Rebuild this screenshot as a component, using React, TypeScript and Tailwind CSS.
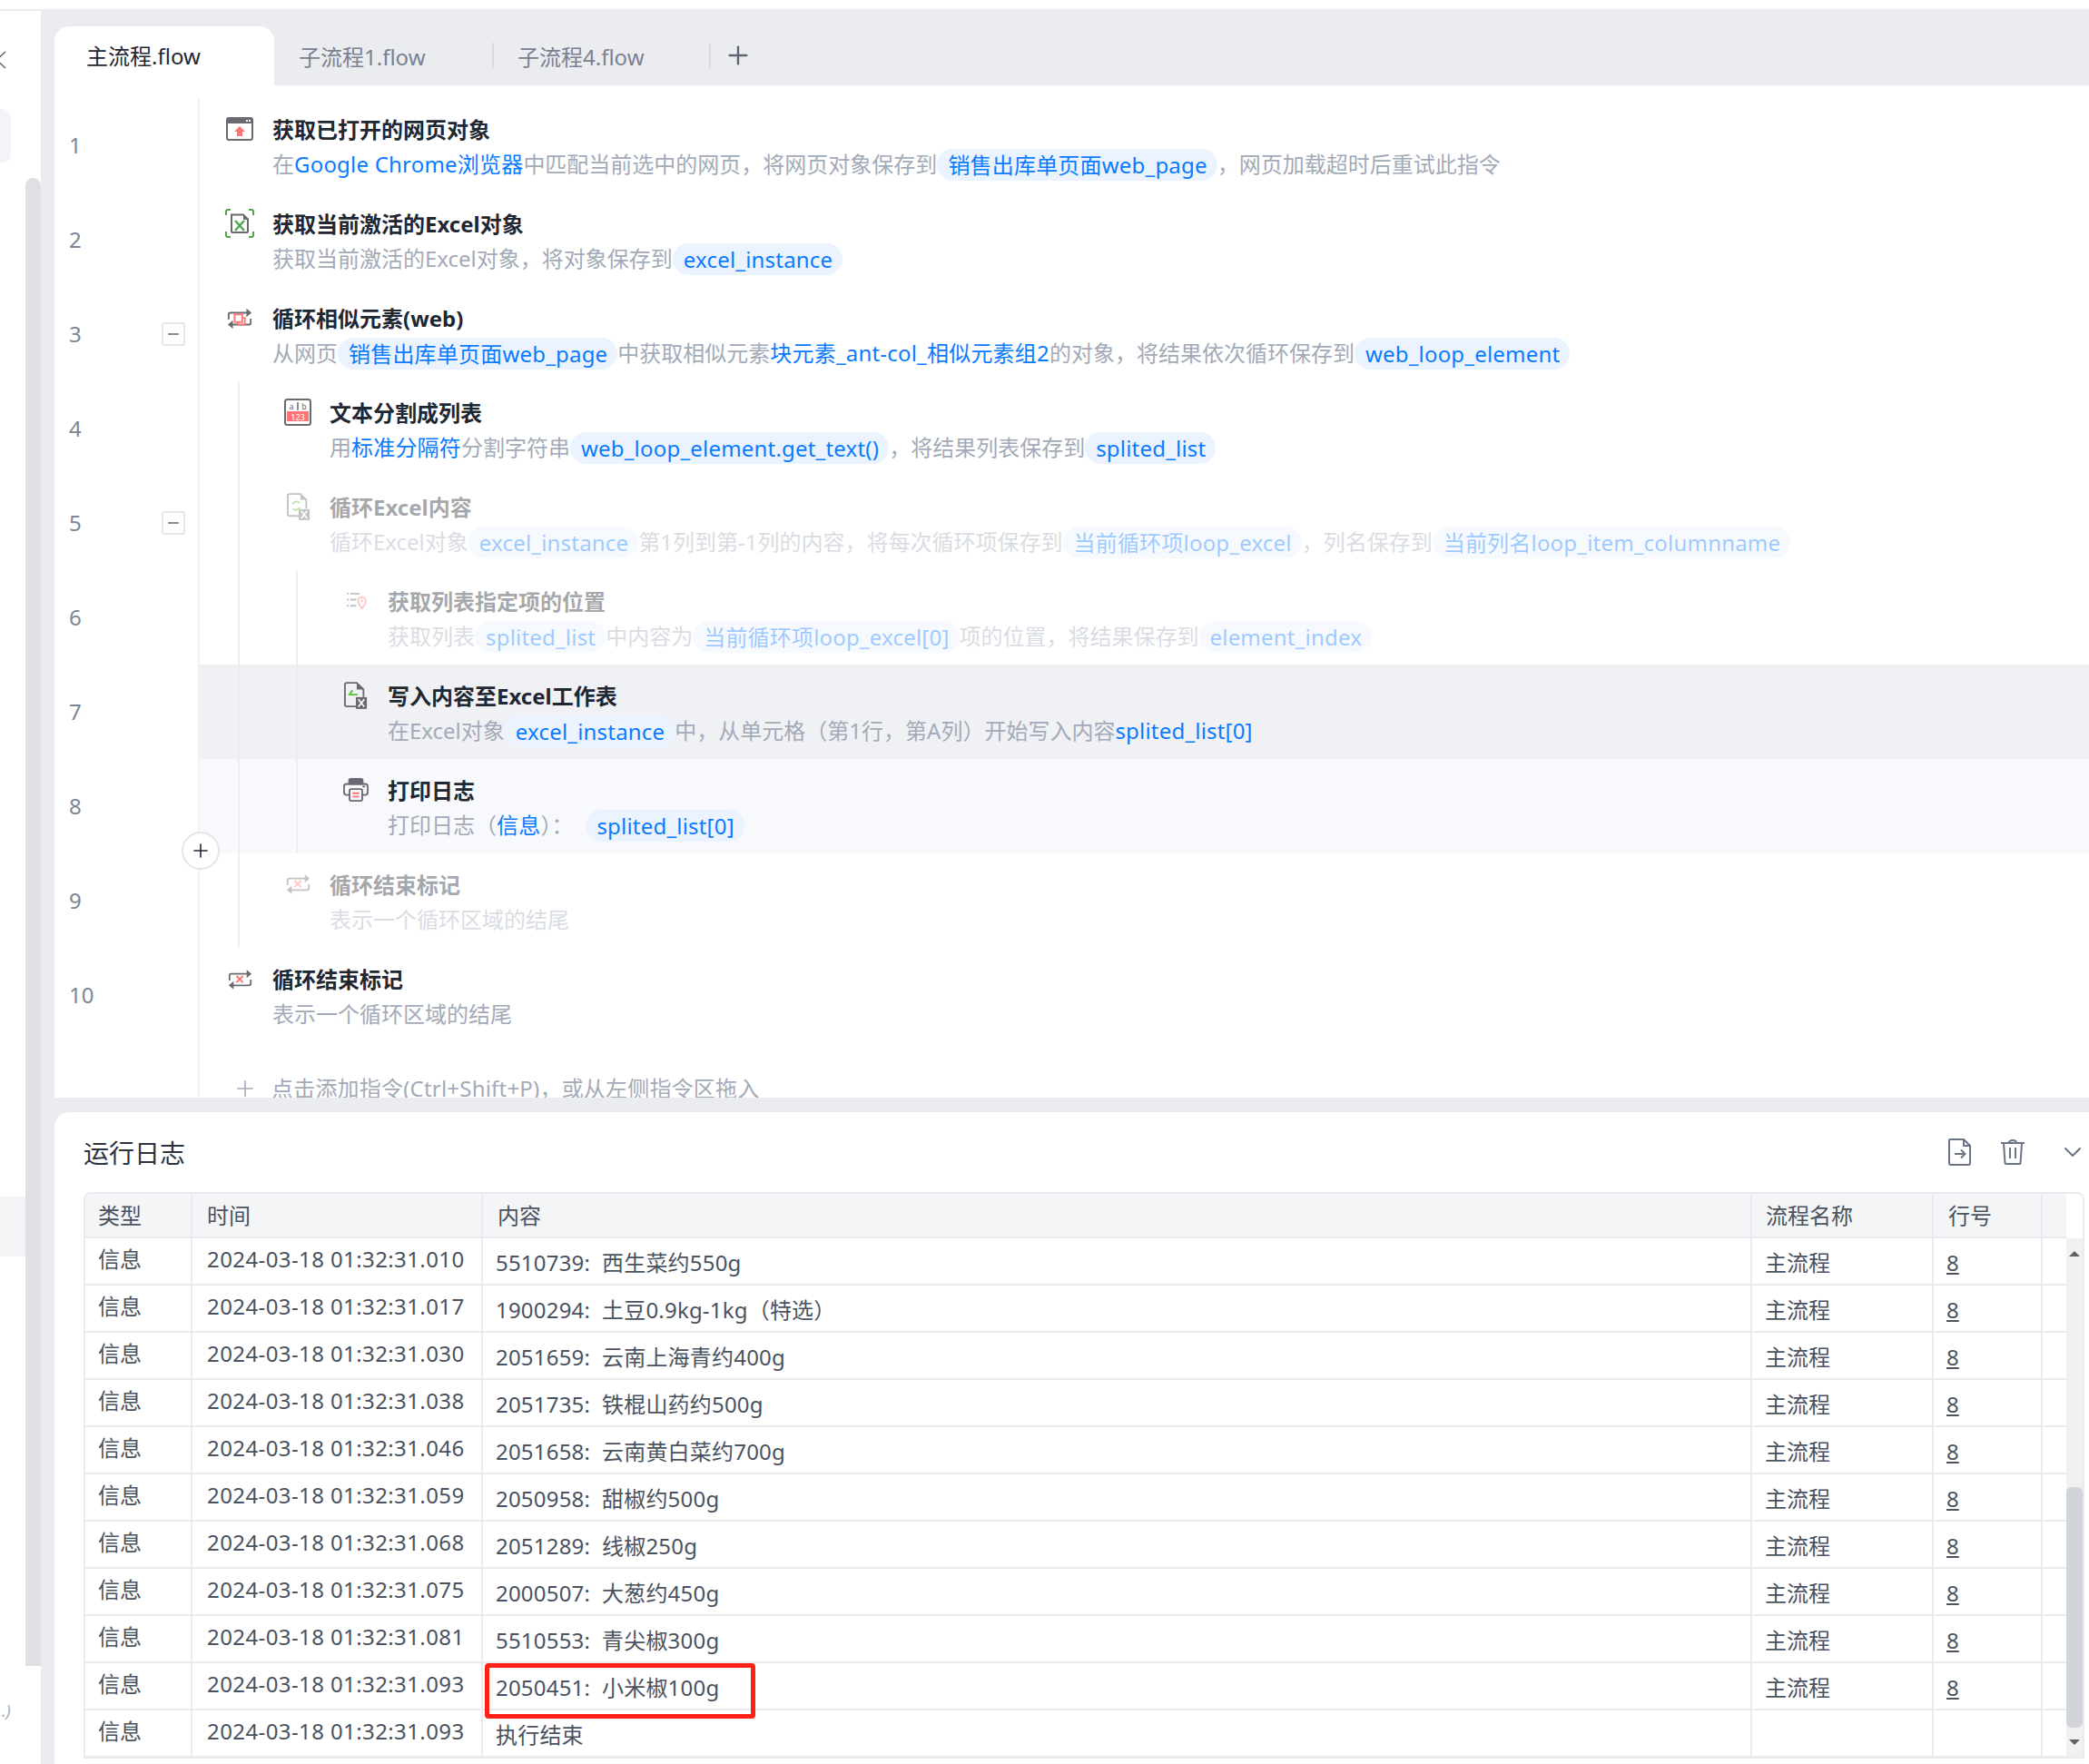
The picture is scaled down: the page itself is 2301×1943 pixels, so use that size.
import { ReactNode } from "react";
import { ChevronDown, Minus, Plus } from "lucide-react";

const GREY = "#6a6a72";
const RED = "#ff7474";

const WindowIcon = () => (
  <svg width="30" height="26" viewBox="0 0 30 26" fill="none">
    <rect x="1" y="1" width="28" height="24" rx="2" stroke={GREY} strokeWidth="2" />
    <path d="M1 3a2 2 0 0 1 2-2h24a2 2 0 0 1 2 2v4H1z" fill={GREY} />
    <path d="M22 3h2v2h-2zM25 3h2v2h-2z" fill="#fff" />
    <path d="M15 10l6 6h-3v5h-6v-5H9z" fill={RED} />
  </svg>
);

const ExcelScanIcon = () => (
  <svg width="32" height="32" viewBox="0 0 32 32" fill="none">
    <path d="M1 7V3a2 2 0 0 1 2-2h3M26 1h3a2 2 0 0 1 2 2v4M31 25v4a2 2 0 0 1-2 2h-3M6 31H3a2 2 0 0 1-2-2v-4" stroke="#4ea64a" strokeWidth="2" />
    <path d="M7 6.500h13l5 5V25a1 1 0 0 1-1 1H8a1 1 0 0 1-1-1z" stroke={GREY} strokeWidth="2" />
    <path d="M20 6l6 6h-6z" fill={GREY} />
    <path d="M11 13l10 11M21 13L11 24" stroke="#4ea64a" strokeWidth="2.400" />
  </svg>
);

const LoopArrows = () => (
  <>
    <path d="M27 6H4a2 2 0 0 0-2 2v6M3 20h23a2 2 0 0 0 2-2v-5" stroke={GREY} strokeWidth="2" />
    <path d="M23 1l6 5-6 5zM7 15l-6 5 6 5z" fill={GREY} />
  </>
);

const LoopSimilarIcon = () => (
  <svg width="28" height="26" viewBox="0 0 30 26" fill="none">
    <LoopArrows />
    <path d="M18 12h3v8h-8v-3" fill="#fff" stroke={RED} strokeWidth="2" />
    <rect x="9" y="8" width="9" height="9" fill="#fff" stroke={RED} strokeWidth="2" />
  </svg>
);

const LoopEndIcon = () => (
  <svg width="27" height="24" viewBox="0 0 30 26" fill="none">
    <LoopArrows />
    <path d="M10.500 8.500l8 8M18.500 8.500l-8 8" stroke={RED} strokeWidth="2.200" />
  </svg>
);

const SplitIcon = () => (
  <svg width="30" height="30" viewBox="0 0 30 30" fill="none">
    <rect x="1" y="1" width="28" height="28" rx="2.500" stroke={GREY} strokeWidth="2" />
    <text x="8" y="12" fontSize="9" fill={GREY} textAnchor="middle" fontFamily="Noto Sans">a</text>
    <path d="M15 4v9" stroke={GREY} strokeWidth="1.500" />
    <text x="22" y="12" fontSize="9" fill={GREY} textAnchor="middle" fontFamily="Noto Sans">b</text>
    <rect x="3" y="14" width="24" height="11" fill={RED} />
    <text x="15" y="23.500" fontSize="9" fill="#fff" textAnchor="middle" fontFamily="Noto Sans">123</text>
  </svg>
);

const ExcelLoopIcon = () => (
  <svg width="26" height="32" viewBox="0 0 28 32" fill="none">
    <path d="M14 27H3a2 2 0 0 1-2-2V3a2 2 0 0 1 2-2h13l7 7v10" stroke={GREY} strokeWidth="2" />
    <path d="M16 1l7 7h-7z" fill={GREY} />
    <path d="M7 13a5 5 0 0 1 8-1.500M15 17a5 5 0 0 1-8 1.500" stroke="#55c02c" strokeWidth="2" />
    <rect x="14" y="19" width="13" height="13" fill={GREY} />
    <path d="M17 21l7 9M24 21l-7 9" stroke="#fff" strokeWidth="1.800" />
  </svg>
);

const ListPinIcon = () => (
  <svg width="23" height="19" viewBox="0 0 24 20" fill="none">
    <path d="M1 2h2M5 2h11M1 9h2M5 9h7M1 16h2M5 16h7" stroke={GREY} strokeWidth="2" />
    <path d="M18.500 19c-3-3.500-4.500-6-4.500-8.500a4.500 4.500 0 0 1 9 0c0 2.500-1.500 5-4.500 8.500z" stroke={RED} strokeWidth="2" />
    <circle cx="18.500" cy="10.500" r="1.500" fill={RED} />
  </svg>
);

const ExcelWriteIcon = () => (
  <svg width="26" height="32" viewBox="0 0 28 32" fill="none">
    <path d="M14 29H3a2 2 0 0 1-2-2V3a2 2 0 0 1 2-2h12l8 8v9" stroke={GREY} strokeWidth="2" />
    <path d="M15 1l8 8h-8z" fill={GREY} />
    <path d="M5 15h11M7 14l3-4" stroke="#55c02c" strokeWidth="2" />
    <rect x="14" y="18" width="13" height="14" fill={GREY} />
    <path d="M17 20.500l7 9M24 20.500l-7 9" stroke="#fff" strokeWidth="1.800" />
  </svg>
);

const PrintIcon = () => (
  <svg width="28" height="26" viewBox="0 0 30 28" fill="none">
    <path d="M7 7V3a2 2 0 0 1 2-2h12a2 2 0 0 1 2 2v4z" fill={GREY} stroke={GREY} strokeWidth="2" />
    <path d="M7 20H4a3 3 0 0 1-3-3v-7a3 3 0 0 1 3-3h22a3 3 0 0 1 3 3v7a3 3 0 0 1-3 3h-3" stroke={GREY} strokeWidth="2" />
    <rect x="7.500" y="13" width="15" height="14" rx="2" fill="#f7f9fd" stroke={GREY} strokeWidth="2" />
    <path d="M11 18h8M11 22h8" stroke={RED} strokeWidth="2" />
    <path d="M23 10h3" stroke={GREY} strokeWidth="2" />
  </svg>
);

const Pill = ({ children, className = "" }: { children: ReactNode; className?: string }) => (
  <span className={`h-[35px] pl-[12px] pr-[11px] rounded-full bg-[#ebf3ff] text-[#0b7bff] tracking-[0.2px] leading-[35px] shrink-0 ${className}`}>{children}</span>
);

const Blue = ({ children }: { children: ReactNode }) => (
  <span className="text-[#0b7bff] tracking-[0.2px]">{children}</span>
);

type Step = {
  depth: number;
  icon: ReactNode;
  iconPad: string;
  title: string;
  desc: ReactNode;
  off?: boolean;
  fold?: boolean;
  bg?: string;
};

const steps: Step[] = [
  {
    depth: 0,
    icon: <WindowIcon />,
    iconPad: "pt-[21px] -ml-[1px]",
    title: "获取已打开的网页对象",
    desc: (
      <>
        <span>在</span>
        <Blue>Google Chrome浏览器</Blue>
        <span>中匹配当前选中的网页，将网页对象保存到</span>
        <Pill>销售出库单页面web_page</Pill>
        <span>，网页加载超时后重试此指令</span>
      </>
    ),
  },
  {
    depth: 0,
    icon: <ExcelScanIcon />,
    iconPad: "pt-[18px] -ml-[2px]",
    title: "获取当前激活的Excel对象",
    desc: (
      <>
        <span>获取当前激活的Excel对象，将对象保存到</span>
        <Pill>excel_instance</Pill>
      </>
    ),
  },
  {
    depth: 0,
    fold: true,
    icon: <LoopSimilarIcon />,
    iconPad: "pt-[22px]",
    title: "循环相似元素(web)",
    desc: (
      <>
        <span>从网页</span>
        <Pill>销售出库单页面web_page</Pill>
        <span>中获取相似元素</span>
        <Blue>块元素_ant-col_相似元素组2</Blue>
        <span>的对象，将结果依次循环保存到</span>
        <Pill>web_loop_element</Pill>
      </>
    ),
  },
  {
    depth: 1,
    icon: <SplitIcon />,
    iconPad: "pt-[19px]",
    title: "文本分割成列表",
    desc: (
      <>
        <span>用</span>
        <Blue>标准分隔符</Blue>
        <span>分割字符串</span>
        <Pill>web_loop_element.get_text()</Pill>
        <span>，将结果列表保存到</span>
        <Pill>splited_list</Pill>
      </>
    ),
  },
  {
    depth: 1,
    fold: true,
    off: true,
    icon: <ExcelLoopIcon />,
    iconPad: "pt-[18px] pl-[3px]",
    title: "循环Excel内容",
    desc: (
      <>
        <span>循环Excel对象</span>
        <Pill>excel_instance</Pill>
        <span>第1列到第-1列的内容，将每次循环项保存到</span>
        <Pill>当前循环项loop_excel</Pill>
        <span>，列名保存到</span>
        <Pill>当前列名loop_item_columnname</Pill>
      </>
    ),
  },
  {
    depth: 2,
    off: true,
    icon: <ListPinIcon />,
    iconPad: "pt-[24px] pl-[4px]",
    title: "获取列表指定项的位置",
    desc: (
      <>
        <span>获取列表</span>
        <Pill>splited_list</Pill>
        <span>中内容为</span>
        <Pill>当前循环项loop_excel[0]</Pill>
        <span>项的位置，将结果保存到</span>
        <Pill>element_index</Pill>
      </>
    ),
  },
  {
    depth: 2,
    bg: "bg-[#f0f1f5]",
    icon: <ExcelWriteIcon />,
    iconPad: "pt-[18px] pl-[2px]",
    title: "写入内容至Excel工作表",
    desc: (
      <>
        <span>在Excel对象</span>
        <Pill>excel_instance</Pill>
        <span>中，从单元格（第1行，第A列）开始写入内容</span>
        <Blue>splited_list[0]</Blue>
      </>
    ),
  },
  {
    depth: 2,
    bg: "bg-[#f7f9fd]",
    icon: <PrintIcon />,
    iconPad: "pt-[21px] pl-[1px]",
    title: "打印日志",
    desc: (
      <>
        <span>打印日志（</span>
        <Blue>信息</Blue>
        <span>）：</span>
        <Pill className="ml-[14px]">splited_list[0]</Pill>
      </>
    ),
  },
  {
    depth: 1,
    off: true,
    icon: <LoopEndIcon />,
    iconPad: "pt-[22px] pl-[2px]",
    title: "循环结束标记",
    desc: <span>表示一个循环区域的结尾</span>,
  },
  {
    depth: 0,
    icon: <LoopEndIcon />,
    iconPad: "pt-[23px] pl-[1px]",
    title: "循环结束标记",
    desc: <span>表示一个循环区域的结尾</span>,
  },
];

const logs = [
  ["2024-03-18 01:32:31.010", "5510739:  西生菜约550g"],
  ["2024-03-18 01:32:31.017", "1900294:  土豆0.9kg-1kg（特选）"],
  ["2024-03-18 01:32:31.030", "2051659:  云南上海青约400g"],
  ["2024-03-18 01:32:31.038", "2051735:  铁棍山药约500g"],
  ["2024-03-18 01:32:31.046", "2051658:  云南黄白菜约700g"],
  ["2024-03-18 01:32:31.059", "2050958:  甜椒约500g"],
  ["2024-03-18 01:32:31.068", "2051289:  线椒250g"],
  ["2024-03-18 01:32:31.075", "2000507:  大葱约450g"],
  ["2024-03-18 01:32:31.081", "5510553:  青尖椒300g"],
  ["2024-03-18 01:32:31.093", "2050451:  小米椒100g"],
  ["2024-03-18 01:32:31.093", "执行结束"],
];

function StepRow({ step, index }: { step: Step; index: number }) {
  return (
    <div className="flex h-[104px]">
      <div className="w-[158px] shrink-0 flex items-center justify-between pl-[16px] pr-[14px] text-[24px] text-[#7d8594]">
        <span>{index + 1}</span>
        {step.fold && (
          <span className="w-[26px] h-[26px] border-2 border-[#e4e6ea] rounded-[2px] flex items-center justify-center text-[#5d6472]">
            <Minus size={18} strokeWidth={2} />
          </span>
        )}
      </div>
      <div className={`flex-1 min-w-0 flex border-l-2 border-[#f0f1f4] ${step.bg ?? ""}`}>
        {step.depth === 0 && <div className="w-[30px] shrink-0" />}
        {step.depth > 0 && <div className="w-[42px] shrink-0" />}
        {step.depth === 2 && <div className="w-[64px] shrink-0 border-l-2 border-[#edeef2]" />}
        {step.depth > 0 && <div className="w-[51px] shrink-0 border-l-2 border-[#edeef2]" />}
        <div className={`flex whitespace-nowrap ${step.off ? "opacity-40" : ""}`}>
          <div className="w-[50px] shrink-0">
            <div className={step.iconPad}>{step.icon}</div>
          </div>
          <div>
            <div className="mt-[18px] h-[34px] leading-[34px] text-[24px] font-bold text-[#1f2733]">{step.title}</div>
            <div className="mt-[4px] h-[35px] flex items-center text-[24px] text-[#a3aab8] [&>span]:pb-[2px]">{step.desc}</div>
          </div>
        </div>
      </div>
    </div>
  );
}

function LogRow({ time, text, last }: { time: string; text: string; last: boolean }) {
  const flowName = text === "执行结束" ? "" : "主流程";
  return (
    <div className="flex h-[52px] border-b-2 border-[#eaebf0] text-[24px] text-[#4a5260]">
      <div className="w-[118px] shrink-0 border-r-2 border-[#eaebf0] pl-[14px] pb-[5px] flex items-center">信息</div>
      <div className="w-[320px] shrink-0 border-r-2 border-[#eaebf0] pl-[16px] pb-[5px] flex items-center tracking-[0.4px]">{time}</div>
      <div className="relative w-[1398px] shrink-0 border-r-2 border-[#eaebf0] pl-[14px] pt-[3px] flex items-center whitespace-pre tracking-[0.2px]">
        {text}
        {last && <div className="absolute left-[2px] top-0 w-[298px] h-[61px] border-[5px] border-[#ff2116] rounded-[4px]" />}
      </div>
      <div className="w-[200px] shrink-0 border-r-2 border-[#eaebf0] pl-[14px] pt-[3px] flex items-center">{flowName}</div>
      <div className="w-[120px] shrink-0 border-r-2 border-[#eaebf0] pl-[14px] pt-[3px] flex items-center">
        {flowName && <span className="underline">8</span>}
      </div>
      <div className="flex-1" />
    </div>
  );
}

export default function App() {
  return (
    <div className="w-[2301px] h-[1943px] overflow-hidden bg-white font-['Noto_Sans','Noto_Sans_CJK_SC',sans-serif]">
      <div className="h-[12px] bg-white border-b-2 border-[#ebecf0]" />
      <div className="flex h-[1931px]">
        <aside className="w-[45px] shrink-0 flex bg-white">
          <div className="w-[28px] shrink-0">
            <div className="mt-[44px] h-[20px] flex items-center -ml-[8px] text-[#5d6472]">
              <svg width="16" height="20" viewBox="0 0 16 20" fill="none">
                <path d="M14 1L4 10l10 9" stroke="currentColor" strokeWidth="1.500" />
              </svg>
            </div>
            <div className="mt-[44px] w-[12px] h-[60px] rounded-r-[10px] bg-[#f3f4f8]" />
            <div className="mt-[1138px] h-[66px] bg-[#f4f5f7]" />
            <div className="mt-[488px] pl-[2px] text-[18px] text-[#a3aab8] italic leading-[24px]">.)</div>
          </div>
          <div className="w-[17px] shrink-0 pt-[184px]">
            <div className="h-[1639px] rounded-t-full rounded-b-[8px] bg-[#dfe0e4]" />
          </div>
        </aside>
        <main className="flex-1 min-w-0 bg-[#ebecf0] pl-[15px] flex flex-col">
          <div className="h-[82px] pt-[17px] flex shrink-0 text-[24px] text-[#7a8190]">
            <div className="w-[242px] h-[65px] bg-white rounded-t-[16px] pl-[35px] flex items-center pt-[1px] text-[#1f2733]">主流程.flow</div>
            <div className="w-[240px] h-[28px] mt-[18px] pl-[27px] flex items-center pt-[3px]">
              <span>子流程1.flow</span>
            </div>
            <div className="w-[239px] h-[28px] mt-[18px] pl-[26px] border-l-2 border-[#d9dbe0] flex items-center pt-[3px]">子流程4.flow</div>
            <div className="h-[28px] mt-[18px] pl-[14px] border-l-2 border-[#d9dbe0] flex items-center text-[#5d6472]">
              <Plus size={32} strokeWidth={1.8} />
            </div>
          </div>
          <div className="relative h-[1115px] shrink-0 bg-white overflow-hidden pt-[14px]">
            {steps.map((step, i) => (
              <StepRow key={i} step={step} index={i} />
            ))}
            <div className="flex h-[60px]">
              <div className="w-[158px] shrink-0" />
              <div className="flex-1 border-l-2 border-[#f0f1f4] pl-[36px] pt-[42px] flex items-center text-[24px] text-[#a3aab8] whitespace-nowrap tracking-[0.2px]">
                <Plus size={28} strokeWidth={1.4} className="mr-[15px]" />
                <span>点击添加指令(Ctrl+Shift+P)，或从左侧指令区拖入</span>
              </div>
            </div>
            <button className="absolute left-[140px] top-[822px] w-[42px] h-[42px] rounded-full bg-white border-2 border-[#e5e5e5] flex items-center justify-center text-[#1f2733]">
              <Plus size={24} strokeWidth={1.6} />
            </button>
          </div>
          <section className="mt-[16px] flex-1 min-h-0 bg-white rounded-tl-[16px] pl-[32px] pr-[5px] flex flex-col">
            <div className="h-[88px] shrink-0 flex items-center justify-between pt-[2px]">
              <span className="text-[28px] text-[#2b3240]">运行日志</span>
              <div className="flex items-center text-[#6b7485]">
                <svg width="26" height="30" viewBox="0 0 26 30" fill="none" stroke="currentColor" strokeWidth="2" className="-mt-[3px]">
                  <path d="M2 1h15l7 7v19a2 2 0 0 1-2 2H3a2 2 0 0 1-2-2V2a1 1 0 0 1 1-1z" />
                  <path d="M17 1v7h7M7 17h11M14 12.500l4.500 4.500-4.500 4.500" />
                </svg>
                <svg className="ml-[31px] -mt-[3px]" width="28" height="28" viewBox="0 0 28 28" fill="none" stroke="currentColor" strokeWidth="2">
                  <path d="M1 4h26M10 3.500c0-2 1-2.500 4-2.500s4 .5 4 2.500M4 4l1.500 22a1 1 0 0 0 1 1h15a1 1 0 0 0 1-1L24 4M11 9v12M17 9v12" />
                </svg>
                <ChevronDown className="ml-[36px] w-[32px] h-[32px] -mr-[3px] -mt-[3px]" strokeWidth={1.5} />
              </div>
            </div>
            <div className="flex border-2 border-[#eaebf0] rounded-t-[8px] h-[624px] shrink-0 overflow-hidden">
              <div className="w-[2182px] shrink-0">
                <div className="flex h-[49px] border-b-2 border-[#eaebf0] bg-[#f4f5f7] text-[24px] text-[#4a5260] pt-[1px]">
                  <div className="w-[118px] shrink-0 border-r-2 border-[#eaebf0] pl-[14px] flex items-center">类型</div>
                  <div className="w-[320px] shrink-0 border-r-2 border-[#eaebf0] pl-[16px] flex items-center">时间</div>
                  <div className="w-[1398px] shrink-0 border-r-2 border-[#eaebf0] pl-[16px] flex items-center">内容</div>
                  <div className="w-[200px] shrink-0 border-r-2 border-[#eaebf0] pl-[15px] flex items-center">流程名称</div>
                  <div className="w-[120px] shrink-0 border-r-2 border-[#eaebf0] pl-[16px] flex items-center">行号</div>
                  <div className="flex-1" />
                </div>
                {logs.map((l, i) => (
                  <LogRow key={i} time={l[0]} text={l[1]} last={i === 9} />
                ))}
              </div>
              <div className="flex-1 pt-[49px] flex flex-col">
                <div className="flex-1 bg-[#f1f1f1] flex flex-col items-center">
                  <div className="h-[34px] shrink-0 flex items-center justify-center">
                    <div className="w-0 h-0 border-x-[6px] border-x-transparent border-b-[6px] border-b-[#5f6368]" />
                  </div>
                  <div className="mt-[240px] w-full h-[265px] rounded-[6px] bg-[#d1d4d8]" />
                  <div className="flex-1 flex items-center justify-center">
                    <div className="w-0 h-0 border-x-[6px] border-x-transparent border-t-[6px] border-t-[#5f6368]" />
                  </div>
                </div>
              </div>
            </div>
          </section>
        </main>
      </div>
    </div>
  );
}
